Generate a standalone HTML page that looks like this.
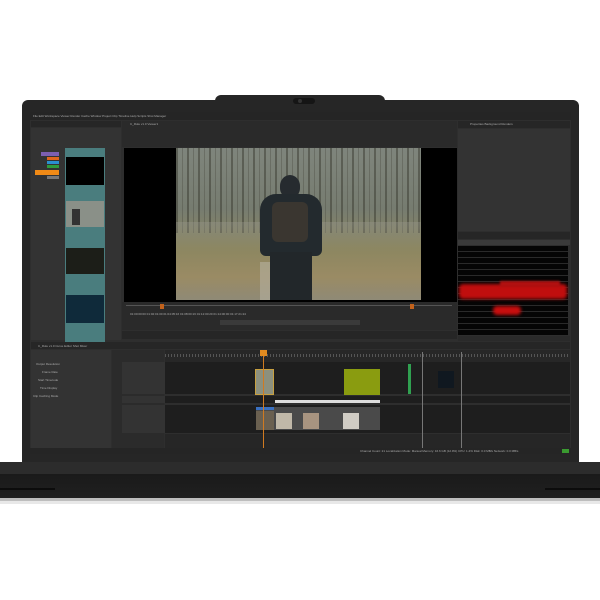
<!DOCTYPE html>
<html><head><style>
*{margin:0;padding:0;box-sizing:border-box}
body{width:600px;height:600px;background:#fff;position:relative;overflow:hidden;font-family:"Liberation Sans",sans-serif}
div{position:absolute}
.t{font-size:3px;color:#aaa;white-space:nowrap}
</style></head><body>
<div style="left:22px;top:100px;width:557px;height:362px;background:#262626;border-radius:6px 6px 0 0"></div>
<div style="left:215px;top:95px;width:170px;height:10px;background:#262626;border-radius:6px 6px 0 0"></div>
<div style="left:293px;top:98px;width:22px;height:6px;background:#151515;border-radius:3px"></div>
<div style="left:298px;top:99px;width:4px;height:4px;background:#333;border-radius:50%"></div>
<div style="left:30px;top:112px;width:541px;height:342px;background:#2e2e2e;overflow:hidden">
  <div style="left:0;top:0;width:541px;height:8px;background:#252525"></div>
  <div class="t" style="left:3px;top:2px">File Edit Workspace Viewer Render Cache Window Project Clip Timeline Help Scripts Shot Manager</div>
  <div style="left:1px;top:9px;width:90px;height:6px;background:#262626"></div>
  <div style="left:1px;top:16px;width:90px;height:212px;background:#333"></div>
  <div style="left:11px;top:40px;width:18px;height:4px;background:#7c5fb0"></div>
  <div style="left:17px;top:45px;width:12px;height:3px;background:#e0651c"></div>
  <div style="left:17px;top:49px;width:12px;height:3px;background:#2a8fd0"></div>
  <div style="left:17px;top:53px;width:12px;height:3px;background:#2e9b3c"></div>
  <div style="left:5px;top:58px;width:24px;height:5px;background:#f08a16"></div>
  <div style="left:17px;top:64px;width:12px;height:3px;background:#777"></div>
  <div style="left:35px;top:36px;width:40px;height:196px;background:#4a7d7e"></div>
  <div style="left:36px;top:45px;width:38px;height:28px;background:#000"></div>
  <div style="left:36px;top:89px;width:38px;height:26px;background:#8a9088"></div>
  <div style="left:42px;top:97px;width:8px;height:16px;background:#333"></div>
  <div style="left:36px;top:136px;width:38px;height:26px;background:#1c1e18"></div>
  <div style="left:36px;top:183px;width:38px;height:28px;background:#0f2a3a"></div>
  <div style="left:92px;top:9px;width:335px;height:26px;background:#2a2a2a"></div>
  <div class="t" style="left:100px;top:10px">C_Rule v1.0  Viewer1</div>
  <div style="left:94px;top:36px;width:333px;height:154px;background:#000"></div>
  <div style="left:146px;top:36px;width:245px;height:152px;background:linear-gradient(180deg,#7f857c 0%,#767c70 40%,#8b8660 65%,#9a8b64 85%,#8f8a76 100%)"></div>
  <div style="left:146px;top:36px;width:245px;height:85px;background:repeating-linear-gradient(90deg,rgba(50,50,40,.45) 0 2px,transparent 2px 6px,rgba(70,70,60,.35) 6px 7px,transparent 7px 11px)"></div>
  <div style="left:146px;top:110px;width:245px;height:30px;background:linear-gradient(180deg,rgba(150,150,140,.4),transparent)"></div>
  <div style="left:230px;top:150px;width:10px;height:38px;background:#b5b0a0;opacity:.6"></div>
  <div style="left:250px;top:63px;width:20px;height:22px;background:#262b2f;border-radius:50% 50% 40% 40%"></div>
  <div style="left:230px;top:82px;width:62px;height:62px;background:#232a2e;border-radius:16px 16px 6px 6px"></div>
  <div style="left:242px;top:90px;width:36px;height:40px;background:#3a3630;border-radius:6px"></div>
  <div style="left:240px;top:140px;width:42px;height:48px;background:#22272a"></div>
  <div style="left:92px;top:190px;width:335px;height:28px;background:#2a2a2a"></div>
  <div style="left:96px;top:193px;width:326px;height:1px;background:#555"></div>
  <div style="left:130px;top:192px;width:4px;height:5px;background:#c2621c"></div>
  <div style="left:380px;top:192px;width:4px;height:5px;background:#c2621c"></div>
  <div class="t" style="left:100px;top:200px">01:00:00:00   01:02:01:00   01:04:05:16   01:08:00:16   01:12:00:20   01:14:00:00   01:17:21:24</div>
  <div style="left:190px;top:208px;width:140px;height:5px;background:#3a3a3a"></div>
  <div style="left:92px;top:219px;width:335px;height:8px;background:#262626"></div>
  <div style="left:428px;top:9px;width:112px;height:7px;background:#262626"></div>
  <div class="t" style="left:440px;top:10px">Properties   Background Renders</div>
  <div style="left:428px;top:17px;width:112px;height:102px;background:#333"></div>
  <div style="left:428px;top:120px;width:112px;height:7px;background:#262626"></div>
  <div style="left:428px;top:128px;width:112px;height:5px;background:#3a3a3a"></div>
  <div style="left:428px;top:134px;width:110px;height:89px;background:#050505;background-image:repeating-linear-gradient(180deg,transparent 0 5px,#2a2a2a 5px 6px)"></div>
  <div style="left:429px;top:172px;width:108px;height:15px;background:#c00e0e;border-radius:4px;filter:blur(1.5px)"></div>
  <div style="left:470px;top:169px;width:60px;height:6px;background:#b01010;filter:blur(1px)"></div>
  <div style="left:463px;top:194px;width:28px;height:9px;background:#c80e0e;border-radius:4px;filter:blur(1.5px)"></div>
  <div style="left:428px;top:224px;width:112px;height:5px;background:#2a2a2a"></div>
  <div style="left:1px;top:230px;width:539px;height:7px;background:#262626"></div>
  <div class="t" style="left:8px;top:232px">C_Rule v1.0   Curve Editor   Shot Mixer</div>
  <div style="left:1px;top:238px;width:80px;height:98px;background:#333"></div>
  <div class="t" style="left:6px;top:250px">Output Resolution</div>
  <div class="t" style="left:12px;top:258px">Frame Rate</div>
  <div class="t" style="left:8px;top:266px">Start Timecode</div>
  <div class="t" style="left:10px;top:274px">Time Display</div>
  <div class="t" style="left:3px;top:282px">Clip Caching Mode</div>
  <div style="left:82px;top:238px;width:52px;height:98px;background:#2b2b2b"></div>
  <div style="left:92px;top:250px;width:43px;height:32px;background:#333"></div>
  <div style="left:92px;top:284px;width:43px;height:7px;background:#333"></div>
  <div style="left:92px;top:293px;width:43px;height:28px;background:#333"></div>
  <div style="left:135px;top:238px;width:405px;height:12px;background:#272727;background-image:repeating-linear-gradient(90deg,#555 0 1px,transparent 1px 3px);background-size:100% 3px;background-repeat:no-repeat;background-position:0 4px"></div>
  <div style="left:135px;top:250px;width:405px;height:32px;background:#1e1e1e"></div>
  <div style="left:135px;top:284px;width:405px;height:7px;background:#1e1e1e"></div>
  <div style="left:135px;top:293px;width:405px;height:28px;background:#1e1e1e"></div>
  <div style="left:135px;top:322px;width:405px;height:14px;background:#262626"></div>
  <div style="left:225px;top:257px;width:19px;height:26px;background:#8c907e;border:1px solid #c8a040"></div>
  <div style="left:314px;top:257px;width:36px;height:26px;background:#8a9c10"></div>
  <div style="left:378px;top:252px;width:3px;height:30px;background:#30a050"></div>
  <div style="left:408px;top:259px;width:16px;height:17px;background:#101820"></div>
  <div style="left:245px;top:288px;width:105px;height:3px;background:#ddd"></div>
  <div style="left:226px;top:295px;width:124px;height:23px;background:#4a4a4a"></div>
  <div style="left:226px;top:295px;width:18px;height:3px;background:#3a70c0"></div>
  <div style="left:226px;top:299px;width:18px;height:19px;background:#6a6050"></div>
  <div style="left:246px;top:301px;width:16px;height:16px;background:#c0b8a8"></div>
  <div style="left:273px;top:301px;width:16px;height:16px;background:#a89480"></div>
  <div style="left:313px;top:301px;width:16px;height:16px;background:#d0ccc4"></div>
  <div style="left:233px;top:238px;width:1px;height:98px;background:#d07a20"></div>
  <div style="left:230px;top:238px;width:7px;height:6px;background:#e08a20"></div>
  <div style="left:392px;top:240px;width:1px;height:96px;background:#777"></div>
  <div style="left:431px;top:240px;width:1px;height:96px;background:#777"></div>
  <div style="left:0;top:336px;width:541px;height:6px;background:#252525"></div>
  <div class="t" style="left:330px;top:337px">Channel Count: 21  Localization Mode: Manual  Memory: 16.6 GB (12.9%)  CPU: 1.4%  Disk: 0.0 MB/s  Network: 0.0 MB/s</div>
  <div style="left:532px;top:337px;width:7px;height:4px;background:#3a9a30"></div>
</div>
<div style="left:0;top:462px;width:600px;height:12px;background:#2c2c2c"></div>
<div style="left:0;top:474px;width:600px;height:24px;background:linear-gradient(#1a1a1a,#202020)"></div>
<div style="left:0;top:488px;width:55px;height:2px;background:#0c0c0c"></div>
<div style="left:545px;top:488px;width:55px;height:2px;background:#0c0c0c"></div>
<div style="left:0;top:498px;width:600px;height:3px;background:#bdbdbd"></div>
<div style="left:0;top:501px;width:600px;height:3px;background:#e8e8e8"></div>
</body></html>
